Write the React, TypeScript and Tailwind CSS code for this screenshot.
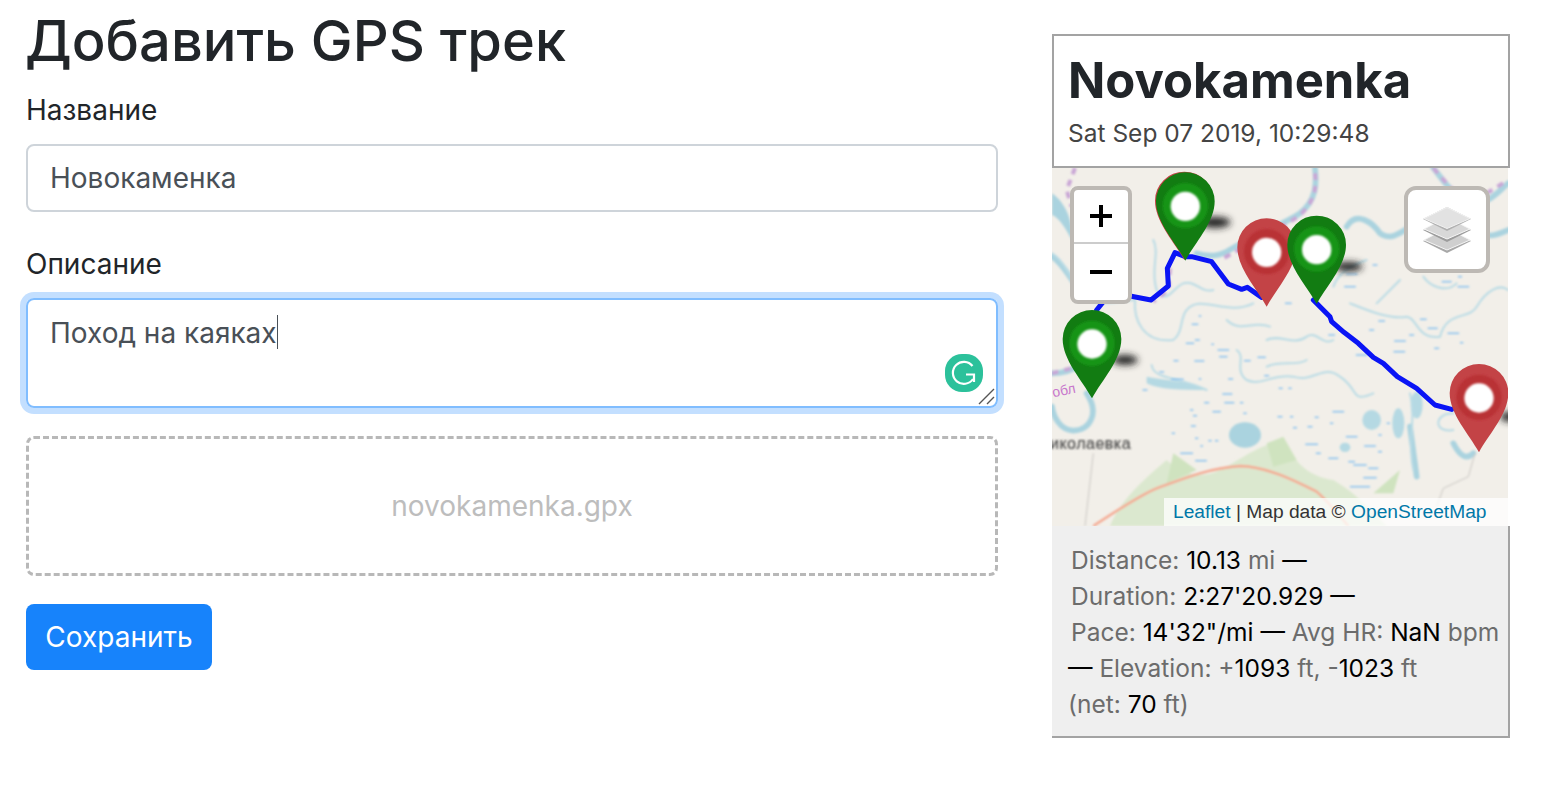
const marsh: number[][] = [
  [935, 342, 35], [930, 380, 35], [1005, 315, 15], [1220, 365, 30], [1270, 380, 35], [1260, 350, 12], [745, 430, 20],
  [1025, 483, 20], [1150, 478, 20], [1178, 505, 30], [1240, 520, 35], [1115, 525, 15], [995, 510, 15], [1080, 543, 35],
  [1078, 575, 35], [1190, 565, 15], [1265, 548, 10], [965, 585, 35], [875, 525, 20], [465, 493, 20], [480, 468, 8],
  [472, 540, 15], [450, 550, 25], [518, 553, 8], [550, 570, 35], [550, 590, 25], [478, 603, 30], [408, 602, 15],
  [622, 602, 20], [665, 592, 25], [365, 636, 15], [412, 658, 38], [480, 657, 8], [572, 657, 15], [680, 647, 15],
  [315, 690, 15], [722, 685, 12], [750, 685, 10], [562, 702, 30], [500, 728, 15], [568, 728, 30], [605, 728, 10],
  [530, 755, 25], [455, 750, 10], [465, 767, 12], [615, 760, 10], [460, 798, 15], [400, 820, 10], [470, 835, 10],
  [510, 842, 10], [530, 842, 10], [485, 858, 8], [440, 880, 38], [483, 902, 35], [720, 770, 15], [755, 770, 10],
  [830, 772, 12], [895, 755, 35], [765, 803, 12], [810, 800, 15], [875, 790, 10], [935, 830, 35], [815, 853, 38],
  [990, 858, 35], [1020, 875, 12], [835, 880, 15], [880, 895, 30], [935, 905, 20], [960, 915, 40], [1000, 925, 30],
  [990, 953, 40], [960, 980, 60], [1045, 790, 10], [1020, 825, 10],
]

const thinRivers = [
  "M36 280 C70 300 90 350 120 400 C150 440 200 430 280 420",
  "M285 420 C280 480 310 550 400 540 C430 520 420 470 440 450 C480 400 560 470 640 430",
  "M340 240 C360 280 330 330 350 390 C380 440 400 380 430 370 C470 360 480 400 520 390",
  "M335 615 C340 660 420 650 500 690",
  "M590 570 C620 590 580 630 620 660 C660 680 700 640 760 650 C820 670 850 610 900 650 C960 690 930 730 1000 700",
  "M680 540 C720 520 760 560 800 530 C830 510 850 560 880 540",
  "M930 430 C980 450 1050 480 1100 470 C1130 470 1130 540 1200 530 C1220 450 1290 480 1310 440 C1340 390 1380 370 1404 390",
  "M1110 700 C1130 780 1100 840 1120 930",
  "M1010 430 C1040 400 1060 380 1080 360",
  "M1150 350 C1170 380 1220 400 1250 370",
  "M880 380 C890 350 920 320 980 300",
  "M1240 760 C1180 760 1180 820 1240 810",
  "M680 620 C720 600 770 620 800 600",
  "M560 480 C600 520 640 480 690 500",
]

const thickRivers = [
  "M825 24 C830 70 830 120 780 160 C720 200 650 220 560 275 C530 290 500 290 470 280",
  "M1180 24 C1210 60 1240 110 1290 130 C1340 140 1380 90 1404 70",
  "M36 640 C70 640 100 630 130 610",
  "M140 700 C180 760 150 810 100 812 C60 810 40 770 36 740",
  "M920 200 C950 150 1000 190 1020 220 C1060 250 1100 200 1130 190",
  "M36 290 C70 310 100 370 130 410",
  "M1300 190 C1330 250 1380 220 1404 210",
  "M1110 800 L1130 950",
  "M1240 850 C1260 890 1280 900 1300 880",
]

const Marker = ({ x, y, red }: { x: number; y: number; red?: boolean }) => (
  <g transform={`translate(${x} ${y})`}>
    <path d="M0 0 C-30 -55 -88 -115 -88 -178 A88 87 0 0 1 88 -178 C88 -115 30 -55 0 0 Z" fill={red ? "#c34346" : "#127c12"} />
    <circle cx="0" cy="-165" r="68" fill={red ? "#b93035" : "#189418"} filter="url(#soft)" />
    <circle cx="0" cy="-163" r="44" fill="#fff" filter="url(#soft)" />
  </g>
)

const TrackMap = () => (
  <svg className="block w-full h-full" viewBox="36 24 1368 1074" preserveAspectRatio="none">
    <defs>
      <filter id="soft"><feGaussianBlur stdDeviation="3" /></filter>
      <filter id="shade" x="-50%" y="-50%" width="200%" height="200%"><feGaussianBlur stdDeviation="11" /></filter>
    </defs>
    <rect x="36" y="24" width="1368" height="1074" fill="#f2efe9" />
    <g filter="url(#soft)">
      <path d="M210 1098 C240 1020 320 950 380 900 C420 940 480 960 540 930 C600 900 690 830 740 850 C760 900 800 950 880 960 C950 1000 1000 1060 1040 1098 Z" fill="#dbe8cf" />
      <path d="M680 850 L730 830 L770 900 L700 920 Z M400 880 L470 930 L380 970 Z M1000 1000 L1080 930 L1060 1000 Z" fill="#cfe3bf" />
      <path d="M36 100 C80 130 100 190 95 240 C70 190 50 170 36 165 Z" fill="#aad3df" />
      <path d="M1140 260 C1160 230 1190 220 1200 240 C1180 270 1160 280 1140 260 Z" fill="#aad3df" />
      <ellipse cx="615" cy="825" rx="48" ry="38" fill="#aad3df" />
      <ellipse cx="995" cy="780" rx="28" ry="30" fill="#b5d9e3" />
      <ellipse cx="1075" cy="790" rx="18" ry="45" fill="#b5d9e3" />
      <ellipse cx="915" cy="862" rx="16" ry="14" fill="#b5d9e3" />
      <ellipse cx="1130" cy="735" rx="18" ry="40" fill="#b5d9e3" />
      <path d="M320 650 C360 660 440 660 500 690 C420 690 360 690 320 670 Z" fill="#b5d9e3" />
      {thickRivers.map((d, i) => (
        <path key={i} d={d} fill="none" stroke="#aad3df" strokeWidth="17" strokeLinecap="round" />
      ))}
      {thinRivers.map((d, i) => (
        <path key={i} d={d} fill="none" stroke="#b9dbe5" strokeWidth="6" strokeLinecap="round" />
      ))}
      <path d="M825 40 C830 80 825 125 780 165 C740 195 680 225 540 300 M390 325 L385 390 L340 425" fill="none" stroke="#c9a6d6" strokeWidth="12" strokeDasharray="20 18" />
      <path d="M1180 24 C1210 60 1230 80 1240 90 M1340 100 L1404 60 M36 640 L130 615 M105 24 L80 90 L95 140" fill="none" stroke="#c9a6d6" strokeWidth="12" strokeDasharray="20 18" />
      <path d="M160 880 L135 1098 M1305 880 L1285 950 L1210 985 L1190 1040" fill="none" stroke="#c9c6c2" strokeWidth="3" />
      <path d="M160 1098 C220 1060 290 1010 350 985 C420 960 500 925 600 918 C680 920 760 960 830 995 C870 1030 900 1070 925 1098" fill="none" stroke="#f5a78f" strokeWidth="7" />
    </g>
    <g filter="url(#soft)">
      {marsh.map(([x, y, w], i) => (
        <rect key={i} x={x - w / 2} y={y - 2} width={w} height="4" fill="#7cbcf0" />
      ))}
    </g>
    <text x="30" y="868" fontFamily="Liberation Sans, sans-serif" fontSize="48" letterSpacing="1.5" fill="#4a4a4a" filter="url(#soft)" stroke="#4a4a4a" strokeWidth="0.6">иколаевка</text>
    <text x="40" y="712" fontFamily="Liberation Sans, sans-serif" fontSize="42" fill="#c878cc" transform="rotate(-12 40 712)">обл</text>
    <path d="M170 450 L190 425 L210 415 L270 408 L333 420 L385 378 L382 325 L405 278 L436 290 L455 290 L515 305 L565 372 L605 388 L622 382 L665 412 M820 420 L870 470 L875 485 L912 517 L955 550 L1000 592 L1030 610 L1072 650 L1130 685 L1185 735 L1235 748" fill="none" stroke="#0a14f5" strokeWidth="15" strokeLinejoin="round" strokeLinecap="round" />
    <g fill="#222" filter="url(#shade)">
      <ellipse cx="525" cy="187" rx="46" ry="17" />
      <ellipse cx="925" cy="320" rx="42" ry="14" />
      <ellipse cx="255" cy="600" rx="38" ry="15" />
      <ellipse cx="1410" cy="770" rx="30" ry="15" />
    </g>
    <Marker x={433} y={300} red />
    <Marker x={436} y={302} />
    <Marker x={680} y={440} red />
    <Marker x={830} y={432} />
    <Marker x={156} y={715} />
    <Marker x={1317} y={877} red />
  </svg>
)

const LayersIcon = () => (
  <svg width="50" height="46" viewBox="0 0 50 46">
    <path d="M25 22 L49 34 L25 46 L1 34 Z" fill="#a8a8a8" />
    <path d="M25 21 L48 33 L25 43 L2 33 Z" fill="#cfcfcf" stroke="#f5f5f5" strokeWidth="1" />
    <path d="M25 11 L49 23 L25 35 L1 23 Z" fill="#9c9c9c" />
    <path d="M25 10 L48 22 L25 32 L2 22 Z" fill="#d8d8d8" stroke="#f7f7f7" strokeWidth="1" />
    <path d="M25 0 L49 12 L25 24 L1 12 Z" fill="#b0b0b0" />
    <path d="M25 0.5 L48 11.5 L25 21.5 L2 11.5 Z" fill="#e2e2e2" stroke="#f2f2f2" strokeWidth="1" />
  </svg>
)

const GrammarlyIcon = () => (
  <span className="absolute left-[917px] top-[54px] w-[38px] h-[38px] rounded-[17px] bg-[#2cc19b] flex items-center justify-center">
    <svg width="28" height="28" viewBox="0 0 28 28" fill="none" stroke="#fff" strokeWidth="2.2">
      <path d="M22.5 7 A11 11 0 1 0 23 20" />
      <path d="M16 15.5 H24 V23" />
    </svg>
  </span>
)

const Val = ({ children }: { children: string }) => <span className="text-black">{children}</span>

const App = () => {
  return (
    <div className="w-[1564px] h-[812px] bg-white flex items-start font-['Inter',sans-serif] text-[#212529] overflow-hidden">
      <form className="w-[972px] ml-[26px] mt-[8px] shrink-0">
        <h1 className="text-[56px] leading-[67px] font-medium -ml-[1px] mb-[14px]">Добавить GPS трек</h1>
        <label className="block text-[28px] leading-[42px] mb-[13px]">Название</label>
        <input
          className="block w-full h-[68px] px-[22px] border-2 border-[#ced4da] rounded-lg text-[28px] text-[#495057] outline-none bg-white"
          defaultValue="Новокаменка"
        />
        <label className="block text-[28px] leading-[42px] mt-[31px] mb-[13px]">Описание</label>
        <div className="relative h-[110px] px-[22px] pt-[12px] border-2 border-[#80bdff] rounded-lg shadow-[0_0_0_6px_#c3dfff] text-[28px] leading-[42px] text-[#495057]">
          Поход на каяках<span className="inline-block align-[-6px] w-[1.5px] h-[34px] bg-[#495057]"></span>
          <GrammarlyIcon />
          <svg className="absolute right-[1px] bottom-[1px]" width="17" height="17" viewBox="0 0 17 17" stroke="#555" strokeWidth="1.4">
            <path d="M1 16 L16 1 M9 16 L16 9" />
          </svg>
        </div>
        <div className="mt-[28px] h-[140px] border-[3px] border-dashed border-[#b8b8b8] rounded-lg flex items-center justify-center text-[28px] text-[#bdbdbd]">
          novokamenka.gpx
        </div>
        <button type="button" className="block mt-[28px] w-[186px] h-[66px] rounded-lg bg-[#1783fb] text-white text-[28px]">
          Сохранить
        </button>
      </form>

      <aside className="w-[458px] ml-[54px] mt-[34px] shrink-0">
        <div className="h-[134px] border-2 border-[#a3a3a3] px-[14px] pt-[12px]">
          <h2 className="text-[49px] leading-[66px] font-bold">Novokamenka</h2>
          <p className="text-[24.5px] leading-[37px] mt-[1px] text-[#444]">Sat Sep 07 2019, 10:29:48</p>
        </div>
        <div className="relative h-[358px] w-[456px] overflow-hidden">
          <TrackMap />
          <div className="absolute left-[18px] top-[18px] w-[62px] border-4 border-[#bdb9b4] rounded-lg bg-white flex flex-col items-center font-['Liberation_Sans',sans-serif]">
            <span className="w-full h-[54px] border-b-2 border-[#ccc] flex items-center justify-center">
              <svg width="24" height="24" viewBox="0 0 24 24" fill="#000"><path d="M10 1h4v9h9v4h-9v9h-4v-9H1v-4h9z" /></svg>
            </span>
            <span className="w-full h-[56px] flex items-center justify-center">
              <svg width="24" height="6" viewBox="0 0 24 6" fill="#000"><rect x="1" y="1" width="22" height="4" /></svg>
            </span>
          </div>
          <div className="absolute right-[18px] top-[18px] w-[86px] h-[87px] border-4 border-[#bdb9b4] rounded-xl bg-white flex items-center justify-center">
            <LayersIcon />
          </div>
          <div className="absolute right-0 bottom-0 w-[344px] h-[28px] bg-white/75 pl-[9px] text-[19.2px] leading-[28px] whitespace-nowrap font-['Liberation_Sans',sans-serif] text-[#333]">
            <a className="text-[#0078a8]">Leaflet</a> | Map data © <a className="text-[#0078a8]">OpenStreetMap</a>
          </div>
        </div>
        <div className="w-[458px] h-[212px] bg-[#efefef] border-r-2 border-b-2 border-[#a3a3a3] pl-[16px] pt-[16px] text-[24.5px] leading-[36px] text-[#6c6c6c] whitespace-nowrap">
          <div className="pl-[3px]">Distance: <Val>10.13</Val> mi <Val>—</Val></div>
          <div className="pl-[3px]">Duration: <Val>2:27'20.929</Val> <Val>—</Val></div>
          <div className="pl-[3px]">Pace: <Val>14'32"/mi</Val> <Val>—</Val> Avg HR: <Val>NaN</Val> bpm</div>
          <div><Val>—</Val> Elevation: +<Val>1093</Val> ft, -<Val>1023</Val> ft</div>
          <div>(net: <Val>70</Val> ft)</div>
        </div>
      </aside>
    </div>
  )
}

export default App
